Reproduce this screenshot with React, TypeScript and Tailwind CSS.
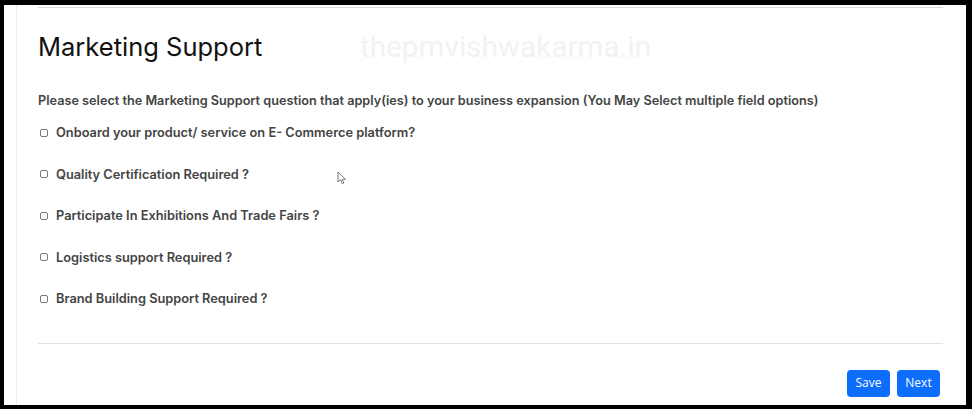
import React from "react";

const options = [
    "Onboard your product/ service on E- Commerce platform?",
    "Quality Certification Required ?",
    "Participate In Exhibitions And Trade Fairs ?",
    "Logistics support Required ?",
    "Brand Building Support Required ?",
];

const Cursor = () => (
    <svg className="absolute left-[333px] top-[166px]" width="10" height="14" viewBox="0 0 10 14" fill="none">
        <path d="M1 1 L1 11 L3.5 8.8 L5.3 12.8 L6.8 12.1 L5.1 8.3 L8.4 8.3 Z" fill="#fff" stroke="#777" strokeWidth="1" strokeLinejoin="round" />
    </svg>
);

export default function App() {
    return (
        <div className="flex h-[409px] w-[972px] bg-black pt-[5px] pr-[6px] pb-[4px] pl-[4px]" style={{ fontFamily: "Inter, 'Noto Sans', sans-serif" }}>
            <div className="relative flex flex-1 bg-white pl-[12px]">
                <div className="flex flex-1 flex-col border-l border-[#ebebeb] pr-[23px] pl-[21px]">
                    <div className="mt-[2px] h-px shrink-0 bg-[#d9d9d9]" />

                    <div className="relative mt-[23px] h-[32px] shrink-0">
                        <h1 className="text-[25.5px] leading-[32px] font-normal text-[#111]">Marketing Support</h1>
                        <span className="absolute top-0 left-[322px] text-[29.7px] leading-[32px] text-[#f2f2f2]" style={{ fontFamily: "Roboto, sans-serif" }}>
                            thepmvishwakarma.in
                        </span>
                    </div>

                    <p className="mt-[30px] shrink-0 text-[12.7px] leading-[16px] font-semibold text-[#444]">
                        Please select the Marketing Support question that apply(ies) to your business expansion (You May Select multiple field options)
                    </p>

                    <div className="mt-[3px] flex shrink-0 flex-col">
                        {options.map((o) => (
                            <label key={o} className="flex h-[41.5px] items-center gap-[8px]">
                                <span className="ml-[2px] size-[8px] rounded-[2px] border border-[#777] bg-white" />
                                <span className="text-[12.8px] font-semibold text-[#444]">{o}</span>
                            </label>
                        ))}
                    </div>

                    <div className="mt-[23px] h-px shrink-0 bg-[#e0e0e0]" />

                    <div className="mt-[26px] flex shrink-0 justify-end gap-[7px] pr-[3px]" style={{ fontFamily: "'Open Sans', sans-serif" }}>
                        <button className="h-[27px] w-[43px] rounded-[4px] bg-[#0d6efd] text-[12px] text-white">Save</button>
                        <button className="h-[27px] w-[43px] rounded-[4px] bg-[#0d6efd] text-[12px] text-white">Next</button>
                    </div>
                </div>
                <Cursor />
            </div>
        </div>
    );
}
